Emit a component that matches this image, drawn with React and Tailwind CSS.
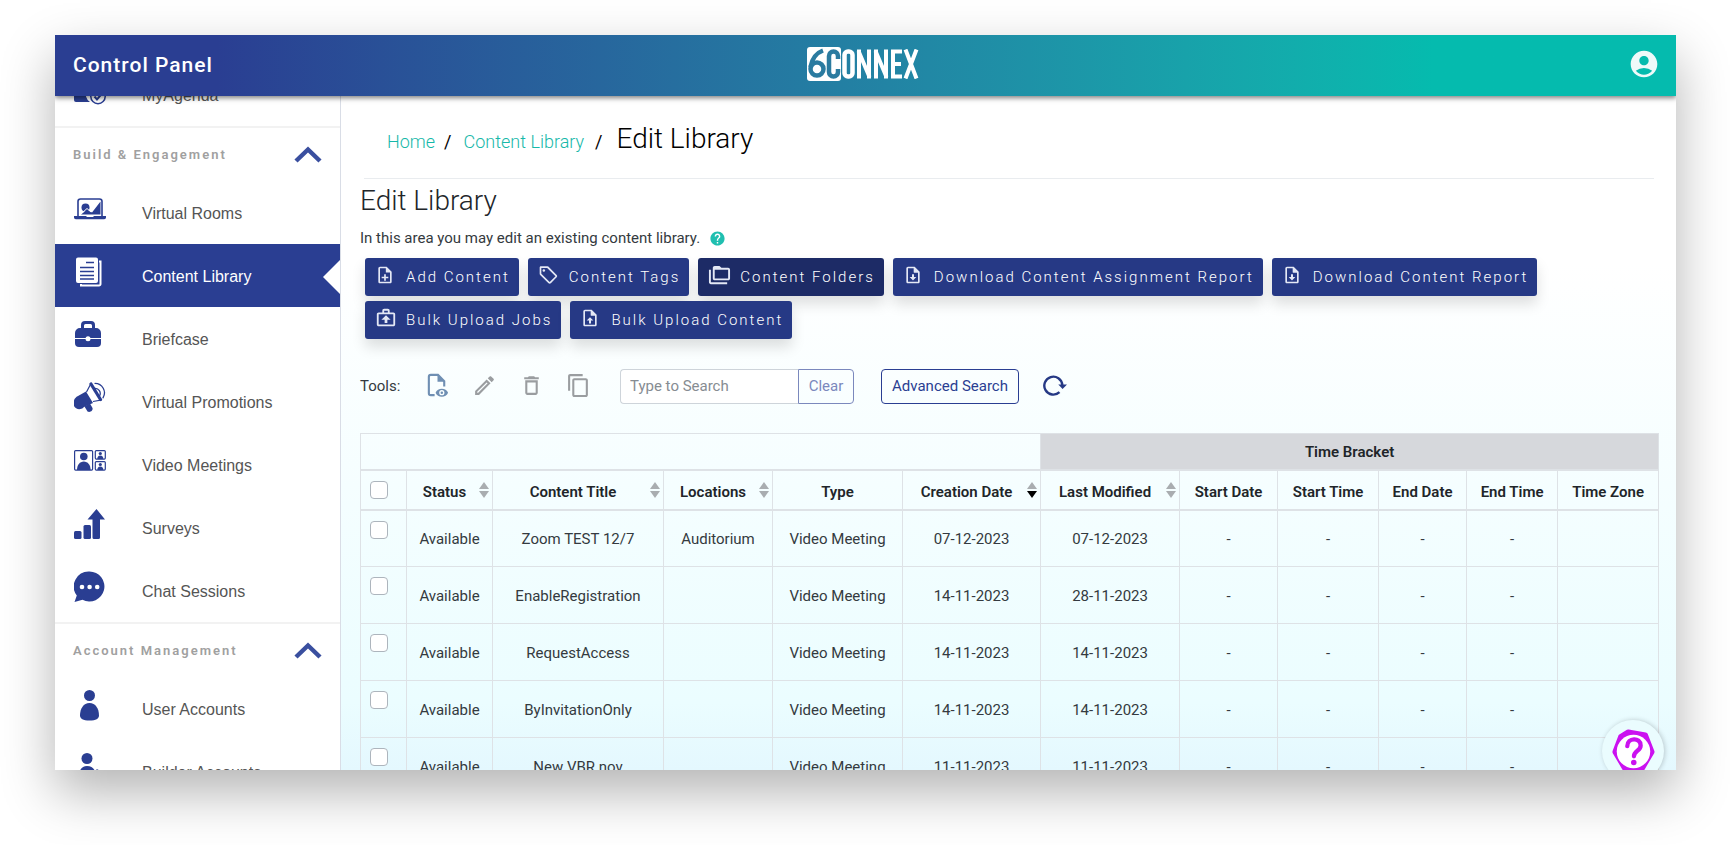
import React from 'react';
import {
  MdAccountCircle, MdHelp, MdOutlineNoteAdd, MdOutlineCreate, MdOutlineDeleteOutline,
  MdOutlineContentCopy,
} from 'react-icons/md';

const Svg = ({ box = '0 0 32 32', size = 32, className = '', children }) => (
  <svg viewBox={box} width={size} height={size} fill="currentColor" className={className} aria-hidden="true">
    {children}
  </svg>
);

const AgendaIcon = () => (
  <Svg>
    <path d="M0 4h24v9a8 8 0 0 0-8 14H2a2 2 0 0 1-2-2z" />
    <path d="M4 19h4M11 19h4" stroke="#fff" strokeWidth="1" />
    <circle cx="24" cy="21.500" r="7.200" fill="#fff" stroke="currentColor" strokeWidth="1.500" />
    <path d="m20.500 21.500 2.500 3 5-6" fill="none" stroke="currentColor" strokeWidth="2" />
  </Svg>
);

const RoomsIcon = () => (
  <Svg>
    <path d="M4 24V8.500A2.500 2.500 0 0 1 6.500 6h19A2.500 2.500 0 0 1 28 8.500V24" fill="none" stroke="currentColor" strokeWidth="1.600" />
    <path d="M0 23h12l1 1h6l1-1h12v1.500a1.800 1.800 0 0 1-1.800 1.800H1.800A1.800 1.800 0 0 1 0 24.500z" />
    <circle cx="11.500" cy="14.500" r="4" />
    <path d="m7 21.500 6-5 5 3 8.500-11v13z" />
    <path d="m7 21 6-5.500 4 3.500" fill="none" stroke="#fff" strokeWidth="1" />
  </Svg>
);

const LibraryIcon = () => (
  <Svg>
    <path d="M4 1.500h18a2 2 0 0 1 2 2V25a2 2 0 0 1-2 2H4a2 2 0 0 1-2-2V3.500a2 2 0 0 1 2-2z" />
    <path d="M25 5.500h1.500V28a1.500 1.500 0 0 1-1.500 1.500H7V28" fill="none" stroke="currentColor" strokeWidth="2" />
    <path d="M12 6.500h8M6 11.500h14M6 15.500h14M6 19.500h14M6 23h14" stroke="#2a3e92" strokeWidth="1.700" />
  </Svg>
);

const BriefcaseIcon = () => (
  <Svg>
    <path d="M7 9V6a4 4 0 0 1 4-4h6a4 4 0 0 1 4 4v3h1a5 5 0 0 1 5 5v5H1v-5a5 5 0 0 1 5-5zm3 0h8V6.500A1.500 1.500 0 0 0 16.500 5h-5A1.500 1.500 0 0 0 10 6.500z" />
    <path d="M1 20h26v4a4 4 0 0 1-4 4H5a4 4 0 0 1-4-4z" />
    <circle cx="14" cy="19.700" r="2.500" fill="#fff" />
  </Svg>
);

const PromoIcon = () => (
  <Svg>
    <path d="M12 9.500 19 21l-9 4a6 6 0 0 1-10-6.500c.5-2 2-3.500 4-4.500z" />
    <path d="M10.500 24.500 16 21.500l2.500 4.500c.8 2.500-2.500 5-5 3.500z" />
    <path d="M12.500 10 17 1.500 27 18l-8 1.500" fill="none" stroke="currentColor" strokeWidth="1.200" />
    <path d="M17 2 26.500 17.500" stroke="currentColor" strokeWidth="3.200" strokeLinecap="round" />
    <path d="M20.500 6.500a5 5 0 0 1 5 7.500M21 1.300a9.500 9.500 0 0 1 8 14.500" fill="none" stroke="currentColor" strokeWidth="1.300" strokeLinecap="round" />
  </Svg>
);

const MeetingsIcon = () => (
  <Svg>
    <g fill="none" stroke="currentColor" strokeWidth="1.200">
      <rect x=".6" y="5.600" width="18" height="19.500" rx="1" />
      <rect x="21.300" y="5.600" width="10" height="8.500" rx="1" />
      <rect x="21.300" y="16.600" width="10" height="8.500" rx="1" />
    </g>
    <circle cx="9.800" cy="11.500" r="3.800" />
    <path d="M3 25c0-5 2.800-8.500 6.800-8.500s6.800 3.500 6.800 8.500z" />
    <circle cx="26.300" cy="8.500" r="1.600" />
    <path d="M23.300 14c0-2 1-3.500 3-3.500s3 1.500 3 3.500z" />
    <circle cx="26.300" cy="19.500" r="1.600" />
    <path d="M23.300 25c0-2 1-3.500 3-3.500s3 1.500 3 3.500z" />
  </Svg>
);

const SurveysIcon = () => (
  <Svg>
    <rect x="0" y="23" width="7.500" height="8" rx="1.500" />
    <rect x="9.500" y="17" width="7.500" height="14" rx="1.500" />
    <path d="M22.500 1 31 11.500h-5V29.500a1.500 1.500 0 0 1-1.500 1.500h-4.500a1.500 1.500 0 0 1-1.500-1.500v-18H13.500z" />
  </Svg>
);

const ChatIcon = () => (
  <Svg>
    <path d="M15.500.5a15 15 0 1 1-7 28.300L.5 31l2.300-6.500A15 15 0 0 1 15.500.5z" />
    <g fill="#fff">
      <circle cx="8" cy="16" r="2.300" />
      <circle cx="15.600" cy="16" r="2.300" />
      <circle cx="23.200" cy="16" r="2.300" />
    </g>
  </Svg>
);

const UserIcon = () => (
  <Svg>
    <circle cx="15.500" cy="6.500" r="5.500" />
    <path d="M15.500 14c6 0 9.500 5.500 9.500 12.500 0 3-3 5-9.500 5S6 29.500 6 26.500C6 19.500 9.500 14 15.500 14z" />
  </Svg>
);

const BuilderIcon = () => (
  <Svg>
    <circle cx="13" cy="6.500" r="5.500" />
    <path d="M13 14c4 0 6.500 2 8 5h1.500v-2l4.500 2-1 8-4 4.500H4c-1-9 2-17.500 9-17.500z" />
  </Svg>
);

const FileBase = ({ children }) => (
  <Svg box="0 0 24 24" size={20}>
    <path d="M14 2H6c-1.100 0-2 .9-2 2v16c0 1.100.9 2 2 2h12c1.100 0 2-.9 2-2V8zM6 20V4h7v5h5v11z" />
    <path d="M13 3v6h6z" />
    {children}
  </Svg>
);
const FileDownIcon = () => (
  <FileBase><path d="M10.800 11h2.400v3.500H16L12 18.500 8 14.500h2.800z" /></FileBase>
);
const FileUpIcon = () => (
  <FileBase><path d="M10.800 18.500h2.400V15H16l-4-4-4 4h2.800z" /></FileBase>
);
const TagIcon = () => (
  <Svg box="0 0 24 24" size={20}>
    <path d="M2 3v7.500c0 .6.200 1 .6 1.400l10 10c.8.800 2 .8 2.800 0l7-7.200c.8-.8.800-2 0-2.800l-10-10A2 2 0 0 0 11 1.500H3.500C2.700 1.500 2 2.200 2 3zm2 .5h7l10 10-7 7-10-10z" />
    <circle cx="7" cy="6.500" r="1.500" />
  </Svg>
);
const FoldersIcon = () => (
  <Svg box="0 0 24 24" size={23}>
    <path d="M3 6H1v13c0 1.100.9 2 2 2h17v-2H3z" />
    <path d="M21 4h-7l-2-2H7c-1.100 0-2 .9-2 2v11c0 1.100.9 2 2 2h14c1.100 0 2-.9 2-2V6c0-1.100-.9-2-2-2zm0 11H7V6h14z" />
  </Svg>
);
const JobsIcon = () => (
  <Svg box="0 0 24 24" size={22}>
    <path d="M20 6h-4V4c0-1.100-.9-2-2-2h-4c-1.100 0-2 .9-2 2v2H4c-1.100 0-2 .9-2 2v11c0 1.100.9 2 2 2h16c1.100 0 2-.9 2-2V8c0-1.100-.9-2-2-2zM10 4h4v2h-4zm10 15H4V8h16z" />
    <path d="M10.500 17.500h3V14H17l-5-5-5 5h3.500z" />
  </Svg>
);
const PreviewIcon = () => (
  <Svg box="0 0 24 26" size={25}>
    <path d="M9 23H5a2 2 0 0 1-2-2V4a2 2 0 0 1 2-2h7.500L19 8.500V14" fill="none" stroke="currentColor" strokeWidth="2.200" />
    <path d="M12 2v7h7z" />
    <path d="M10 20.500c2-5.500 11-5.500 13 0-2 5.500-11 5.500-13 0zm6.500 2.700a2.700 2.700 0 1 0 0-5.400 2.700 2.700 0 0 0 0 5.400z" fillRule="evenodd" />
    <circle cx="16.500" cy="20.500" r="1.300" />
  </Svg>
);
const RefreshIcon = () => (
  <Svg box="0 0 24 24" size={24}>
    <path d="M16.500 19.200A9 9 0 1 1 19.300 12" fill="none" stroke="currentColor" strokeWidth="2.400" />
    <path d="M15.300 11.500h8.700l-4.400 4.500z" />
  </Svg>
);

const SECTIONS = [
  {
    title: 'Build & Engagement',
    items: [
      { label: 'Virtual Rooms', icon: RoomsIcon },
      { label: 'Content Library', icon: LibraryIcon, active: true },
      { label: 'Briefcase', icon: BriefcaseIcon },
      { label: 'Virtual Promotions', icon: PromoIcon },
      { label: 'Video Meetings', icon: MeetingsIcon },
      { label: 'Surveys', icon: SurveysIcon },
      { label: 'Chat Sessions', icon: ChatIcon },
    ],
  },
  {
    title: 'Account Management',
    items: [
      { label: 'User Accounts', icon: UserIcon },
      { label: 'Builder Accounts', icon: BuilderIcon },
    ],
  },
];

const ACTIONS = [
  { label: 'Add Content', icon: () => <MdOutlineNoteAdd size={20} /> },
  { label: 'Content Tags', icon: TagIcon },
  { label: 'Content Folders', icon: FoldersIcon, dark: true },
  { label: 'Download Content Assignment Report', icon: FileDownIcon },
  { label: 'Download Content Report', icon: FileDownIcon },
  { label: 'Bulk Upload Jobs', icon: JobsIcon },
  { label: 'Bulk Upload Content', icon: FileUpIcon },
];

const COLUMNS = [
  { label: 'Status', width: 'w-[86px]', sort: 'both' },
  { label: 'Content Title', width: 'w-[171px]', sort: 'both' },
  { label: 'Locations', width: 'w-[109px]', sort: 'both' },
  { label: 'Type', width: 'w-[130px]' },
  { label: 'Creation Date', width: 'w-[138px]', sort: 'desc' },
  { label: 'Last Modified', width: 'w-[139px]', sort: 'both' },
  { label: 'Start Date', width: 'w-[98px]' },
  { label: 'Start Time', width: 'w-[101px]' },
  { label: 'End Date', width: 'w-[88px]' },
  { label: 'End Time', width: 'w-[91px]' },
  { label: 'Time Zone', width: 'w-[101px]' },
];

const ROWS = [
  ['Available', 'Zoom TEST 12/7', 'Auditorium', 'Video Meeting', '07-12-2023', '07-12-2023', '-', '-', '-', '-', ''],
  ['Available', 'EnableRegistration', '', 'Video Meeting', '14-11-2023', '28-11-2023', '-', '-', '-', '-', ''],
  ['Available', 'RequestAccess', '', 'Video Meeting', '14-11-2023', '14-11-2023', '-', '-', '-', '-', ''],
  ['Available', 'ByInvitationOnly', '', 'Video Meeting', '14-11-2023', '14-11-2023', '-', '-', '-', '-', ''],
  ['Available', 'New VBR nov', '', 'Video Meeting', '11-11-2023', '11-11-2023', '-', '-', '-', '-', ''],
];

function Logo() {
  return (
    <div className="flex items-center text-white" aria-label="6Connex">
      <svg viewBox="0 0 34 34" width="34" height="34" aria-hidden="true">
        <rect width="34" height="34" rx="3" fill="#fff" />
        <g fill="none" stroke="#2b7ba0">
          <circle cx="10" cy="22" r="6.500" strokeWidth="4.500" />
          <path d="M3.500 20C5 12 9 6 16 3.500" strokeWidth="4.500" />
          <path d="M31 12V9a4.500 4.500 0 0 0-9 0v16a4.500 4.500 0 0 0 9 0v-3" strokeWidth="4.500" />
        </g>
      </svg>
      <svg viewBox="0 0 78 30" width="78" height="30" fill="none" stroke="#fff" strokeWidth="4" aria-hidden="true">
        <rect x="3.500" y="2.500" width="8" height="25" rx="3.500" strokeWidth="4.500" />
        <path d="M18 29.500V.5M28 29.500V.5M35 29.500V.5M45 29.500V.5M61 2.500h-9v25h9M52 15h8" />
        <path d="M17.500 2 28.500 28M34.500 2l11 26M64.500.5 75.500 29.500M75.500.5 64.500 29.500" />
      </svg>
    </div>
  );
}

function NavItem({ label, icon: Icon, active }) {
  return (
    <a
      href="#"
      className={`relative flex items-center h-[63px] pl-[19px] pt-[2px] text-base ${
        active ? 'bg-[#2a3e92] text-white' : 'text-[#555]'
      }`}
    >
      <span className={`w-[68px] pb-[10px] ${active ? 'text-white' : 'text-[#2a3e92]'}`}>
        <Icon />
      </span>
      {label}
      {active && (
        <svg viewBox="0 0 17 34" width="17" height="34" className="absolute right-0 top-4" aria-hidden="true">
          <path d="M17 0v34L0 17z" fill="#fff" />
        </svg>
      )}
    </a>
  );
}

function Sidebar() {
  return (
    <aside className="w-[286px] shrink-0 overflow-hidden bg-white border-r border-[#d9dde6]">
      <nav className="-mt-[33px] font-['Liberation_Sans',sans-serif]">
        <NavItem label="MyAgenda" icon={AgendaIcon} />
        {SECTIONS.map(({ title, items }) => (
          <div key={title}>
            <button className="flex items-center justify-between w-full h-[55px] px-[18px] border-t-2 border-[#f2f2f2] font-['Roboto',sans-serif] text-[13px] font-semibold tracking-[2px] text-[#a0a0a0]">
              {title}
              <svg viewBox="0 0 28 18" width="28" height="18" aria-hidden="true">
                <path d="M2 15 14 3.500 26 15" fill="none" stroke="#3a4f9f" strokeWidth="4.500" />
              </svg>
            </button>
            {items.map((item) => <NavItem key={item.label} {...item} />)}
          </div>
        ))}
      </nav>
    </aside>
  );
}

function SortArrows({ sort }) {
  return (
    <svg viewBox="0 0 10 16" width="10" height="16" className="absolute right-[3px] top-[11px]" aria-hidden="true">
      <path d="M5 0 10 7H0z" fill="#a9adb0" />
      <path d="M0 9h10L5 16z" fill={sort === 'desc' ? '#000' : '#a9adb0'} />
    </svg>
  );
}

function Checkbox({ label }) {
  return (
    <input
      type="checkbox"
      aria-label={label}
      className="block w-[18px] h-[18px] ml-[9px] appearance-none rounded border border-[#adb5bd] bg-white checked:bg-[#2a3e92]"
    />
  );
}

function ContentTable() {
  const cell = 'border border-[#dee2e6]';
  return (
    <table className="w-full table-fixed border-collapse text-center text-[15px] text-[#343a40]">
      <colgroup>
        <col className="w-[46px]" />
        {COLUMNS.map((c) => <col key={c.label} className={c.width} />)}
      </colgroup>
      <thead className="text-[#212529]">
        <tr className="h-9">
          <td colSpan={6} className={cell} />
          <th colSpan={6} scope="colgroup" className={`${cell} pt-[2px] bg-[#d6d8dc] font-semibold`}>Time Bracket</th>
        </tr>
        <tr className="h-10">
          <th className={`${cell} border-y-2`}><Checkbox label="Select all" /></th>
          {COLUMNS.map(({ label, sort }) => (
            <th
              key={label}
              scope="col"
              className={`${cell} relative border-y-2 pt-[6px] font-semibold whitespace-nowrap ${sort ? 'pr-[10px]' : ''}`}
            >
              {label}
              {sort && <SortArrows sort={sort} />}
            </th>
          ))}
        </tr>
      </thead>
      <tbody>
        {ROWS.map((row) => (
          <tr key={row[1]} className="h-[57px]">
            <td className={`${cell} pt-[10px] align-top`}><Checkbox label={`Select ${row[1]}`} /></td>
            {row.map((value, i) => (
              <td key={COLUMNS[i].label} className={`${cell} pt-[2px] whitespace-nowrap`}>{value}</td>
            ))}
          </tr>
        ))}
      </tbody>
    </table>
  );
}

function Toolbar() {
  return (
    <div className="flex items-center mt-[30px] h-[35px] text-[15px]">
      <span className="w-[65px] text-[#343a40]">Tools:</span>
      <div className="flex items-center gap-[22px] pb-[2px] text-[#9a9da0]">
        <button aria-label="Preview" className="text-[#6f8fb3]"><PreviewIcon /></button>
        <button aria-label="Edit"><MdOutlineCreate size={25} /></button>
        <button aria-label="Delete"><MdOutlineDeleteOutline size={25} /></button>
        <button aria-label="Copy"><MdOutlineContentCopy size={25} /></button>
      </div>
      <div className="flex h-full ml-[29px]">
        <input
          type="text"
          aria-label="Type to Search"
          placeholder="Type to Search"
          className="w-[178px] px-[9px] rounded-l border border-r-0 border-[#ced4da] bg-white placeholder:text-[#868c92]"
        />
        <button className="w-[56px] rounded-r border border-[#7b88bd] text-[#7b88bd]">Clear</button>
      </div>
      <button className="h-full w-[138px] ml-[27px] rounded border border-[#2a3e92] text-[#2a3e92] whitespace-nowrap">
        Advanced Search
      </button>
      <button aria-label="Refresh" className="ml-6 pb-[3px] text-[#263985]"><RefreshIcon /></button>
    </div>
  );
}

function HelpBadge() {
  return (
    <button
      aria-label="Help"
      className="absolute right-3 -bottom-[12px] flex items-center justify-center w-[62px] h-[62px] rounded-full bg-[#eafcfe] shadow-[1px_0_5px_rgba(0,0,0,0.2)]"
    >
      <svg viewBox="0 0 46 46" width="44" height="44" aria-hidden="true">
        <path
          d="M18 3 36 6 43 24 33 41 14 41 4 24 10 8Z"
          fill="#cb11f0"
          stroke="#cb11f0"
          strokeWidth="5"
          strokeLinejoin="round"
        />
        <circle cx="23.500" cy="23.500" r="17.500" fill="#fff" />
        <path d="M17 18c0-9.500 14-9.500 14-.8 0 6-7 5-7 11.300" fill="none" stroke="#cb11f0" strokeWidth="4.500" strokeLinecap="round" />
        <circle cx="23.800" cy="35" r="2.900" fill="#cb11f0" />
      </svg>
    </button>
  );
}

export default function App() {
  return (
    <div className="h-screen bg-white pl-[55px] pr-[54px] pt-[35px] pb-[75px] overflow-hidden font-['Roboto',sans-serif]">
      <div className="flex flex-col h-full shadow-[0_22px_50px_rgba(0,0,0,0.3)]">
        <div className="flex flex-col h-full overflow-hidden">
          <header className="relative z-10 grid grid-cols-3 items-center h-[61px] shrink-0 pl-[18px] pr-4 bg-linear-to-r from-[#2a3e92] from-10% to-[#05bbae] to-85% shadow-[0_2px_5px_rgba(0,0,0,0.5)]">
            <h2 className="text-[21px] font-medium tracking-[1px] text-white">Control Panel</h2>
            <div className="flex justify-center pb-1 pr-2"><Logo /></div>
            <button aria-label="Account" className="justify-self-end pb-[3px] text-[#eefaf9]"><MdAccountCircle size={32} /></button>
          </header>
          <div className="flex flex-1 min-h-0">
            <Sidebar />
            <main className="relative flex-1 min-w-0 overflow-hidden pl-[19px] pr-[18px] bg-linear-to-b from-white from-25% via-[#ebfdff] via-90% to-[#e4f8fe]">
              <nav aria-label="Breadcrumb" className="flex items-baseline h-[83px] mx-1 pt-[25px] pl-[23px] border-b border-[#e9ecef] text-lg">
                <a href="#" className="font-light text-[#16b8a9]">Home</a>
                <span className="pl-[9px] pr-3">/</span>
                <a href="#" className="font-light text-[#16b8a9]">Content Library</a>
                <span className="pl-[11px] pr-[14px]">/</span>
                <span className="text-[28px] leading-9 font-light text-black">Edit Library</span>
              </nav>
              <h1 className="mt-[2px] text-[28px] leading-10 font-light text-[#212529]">Edit Library</h1>
              <p className="flex items-center gap-[9px] mt-[3px] h-7 text-[15px] text-[#343a40]">
                In this area you may edit an existing content library.
                <MdHelp size={17} className="text-[#20bfb0]" />
              </p>
              <div className="flex flex-wrap gap-x-[9px] gap-y-[5px] mt-[6px] ml-[5px]">
                {ACTIONS.map(({ label, icon: Icon, dark }) => (
                  <button
                    key={label}
                    className={`flex items-center h-[38px] pl-[10px] pr-[9px] rounded-[3px] text-[15px] font-light tracking-[2px] text-white whitespace-nowrap shadow-[0_8px_14px_rgba(0,0,0,0.13)] ${
                      dark ? 'bg-[#1d2b66]' : 'bg-[#263985]'
                    }`}
                  >
                    <span className="min-w-[31px] pr-[9px] pb-1 text-[#e4e8f5]"><Icon /></span>
                    {label}
                  </button>
                ))}
              </div>
              <Toolbar />
              <div className="mt-[29px]">
                <ContentTable />
              </div>
              <HelpBadge />
            </main>
          </div>
        </div>
      </div>
    </div>
  );
}
